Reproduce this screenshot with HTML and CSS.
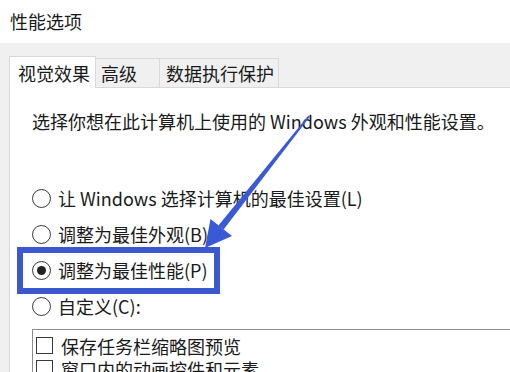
FILE: index.html
```html
<!DOCTYPE html>
<html lang="zh-CN">
<head>
<meta charset="utf-8">
<title>性能选项</title>
<link rel="stylesheet" href="styles.css">
</head>
<body>
<div class="window">
  <div class="titlebar">性能选项</div>
  <div class="dialog">
    <div class="tabs">
      <div class="tab active">视觉效果</div>
      <div class="tab">高级</div>
      <div class="tab">数据执行保护</div>
    </div>
    <div class="panel">
      <p class="desc">选择你想在此计算机上使用的 Windows 外观和性能设置。</p>
      <div class="options">
        <div class="radio"><span class="dot"></span><span>让 Windows 选择计算机的最佳设置(L)</span></div>
        <div class="radio"><span class="dot"></span><span>调整为最佳外观(B)</span></div>
        <div class="radio"><span class="dot checked"></span><span>调整为最佳性能(P)</span></div>
        <div class="radio"><span class="dot"></span><span>自定义(C):</span></div>
      </div>
      <div class="listbox">
        <div class="check"><span class="box"></span><span>保存任务栏缩略图预览</span></div>
        <div class="check"><span class="box"></span><span>窗口内的动画控件和元素</span></div>
      </div>
    </div>
  </div>
  <div class="highlight"></div>
  <svg class="arrow" width="510" height="372" viewBox="0 0 510 372">
    <polygon points="308.4,115.5 309.8,116.7 223.6,229.6 218.4,225.6" fill="#3a59d4"/>
    <polygon points="205,248 210.5,219 232,236" fill="#3a59d4"/>
  </svg>
</div>
</body>
</html>
```
FILE: styles.css
```css
* { box-sizing: border-box; }
html, body {
  margin: 0;
  padding: 0;
  width: 510px;
  height: 372px;
  overflow: hidden;
  background: #ffffff;
}
.window {
  position: relative;
  width: 510px;
  height: 372px;
  overflow: hidden;
  font-family: "Noto Sans CJK SC", "Noto Sans", sans-serif;
  color: #1a1a1a;
  font-size: 18px;
}
.titlebar {
  height: 43px;
  padding-left: 10px;
  line-height: 42px;
  font-size: 18px;
  background: #ffffff;
}
.dialog {
  background: #f0f0f0;
  padding: 13px 0 0 9px;
  width: 560px;
  height: 329px;
}
.tabs {
  display: flex;
  align-items: flex-end;
  height: 31px;
  position: relative;
  z-index: 1;
}
.tab {
  height: 29px;
  line-height: 28px;
  padding: 0 6px;
  border: 1px solid #d9d9d9;
  border-bottom: none;
  border-left: none;
  background: #f0f0f0;
  white-space: nowrap;
}
.tab:nth-child(2) { width: 64px; padding-left: 5px; }
.tab:nth-child(3) { width: 119px; }
.tab.active {
  width: 87px;
  height: 32px;
  margin-bottom: -1px;
  line-height: 32px;
  padding-left: 8px;
  background: #ffffff;
  border-left: 1px solid #d9d9d9;
}
.panel {
  background: #ffffff;
  border-top: 1px solid #d9d9d9;
  border-left: 1px solid #d9d9d9;
  height: 300px;
  padding: 21px 0 0 22px;
}
.desc {
  margin: 0;
  line-height: 24px;
  white-space: nowrap;
}
.options {
  margin-top: 47px;
}
.radio {
  display: flex;
  align-items: center;
  height: 36px;
  line-height: 24px;
  white-space: nowrap;
}
.dot {
  width: 19px;
  height: 19px;
  border: 1.5px solid #3a3a3a;
  border-radius: 50%;
  margin-right: 7px;
  display: flex;
  align-items: center;
  justify-content: center;
  background: #fff;
  flex: none;
}
.dot.checked::after {
  content: "";
  width: 9px;
  height: 9px;
  border-radius: 50%;
  background: #222;
}
.listbox {
  margin-top: 5px;
  border: 1px solid #8c8c8c;
  border-right: none;
  padding: 4px 0 0 3px;
  height: 60px;
}
.check {
  display: flex;
  align-items: center;
  height: 23px;
  line-height: 22px;
  white-space: nowrap;
}
.box {
  width: 17px;
  height: 17px;
  border: 1.5px solid #3a3a3a;
  margin-right: 8px;
  background: #fff;
  flex: none;
}
.highlight {
  position: absolute;
  left: 17px;
  top: 247px;
  width: 203px;
  height: 47px;
  border: 6px solid #3c58cf;
}
.arrow {
  position: absolute;
  left: 0;
  top: 0;
}
```
